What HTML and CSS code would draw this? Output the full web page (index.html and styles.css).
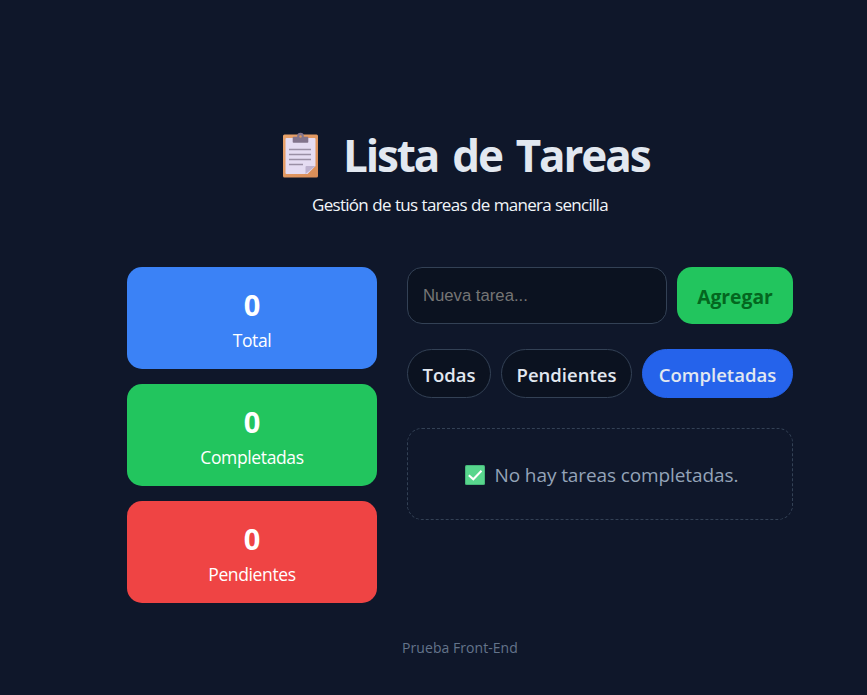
FILE: index.html
```html
<!DOCTYPE html>
<html lang="es">
<head>
<meta charset="utf-8">
<title>Lista de Tareas</title>
<link rel="stylesheet" href="styles.css">
</head>
<body>
<main class="app">
  <header class="header">
    <h1 class="title">
      <svg class="clipboard" viewBox="0 0 36 46" aria-hidden="true">
        <defs><linearGradient id="board" x2="1" y2="1"><stop stop-color="#e9a36b"/><stop offset="1" stop-color="#d98d58"/></linearGradient></defs>
        <rect x=".5" y="2.500" width="35" height="43" rx="1.500" fill="url(#board)"/>
        <path d="M4 6h28a1 1 0 0 1 1 1v27l-8 8H4a1 1 0 0 1-1-1V7a1 1 0 0 1 1-1z" fill="#e5dcf2"/>
        <path d="M23 42v-7a1 1 0 0 1 1-1h9z" fill="#bdb1ce"/>
        <path d="M11 5.500h4.500V4A2.500 2.500 0 0 1 20.500 4V5.500H25V10H11z" fill="#83748c" stroke="#83748c" stroke-width="1.600" stroke-linejoin="round"/>
        <circle cx="18" cy="4.500" r="1.200" fill="#d9965f"/>
        <path d="M6.500 17.500h22M6.500 22.500h22M6.500 27.500h22M6.500 32.500h14" stroke="#9a8fa5" stroke-width="1.600"/>
      </svg>
      <span class="title-text">Lista de Tareas</span>
    </h1>
    <p class="subtitle">Gestión de tus tareas de manera sencilla</p>
  </header>
  <div class="layout">
    <aside class="stats">
      <div class="stat total"><strong>0</strong><span>Total</span></div>
      <div class="stat done"><strong>0</strong><span>Completadas</span></div>
      <div class="stat pending"><strong>0</strong><span>Pendientes</span></div>
    </aside>
    <section class="tasks">
      <form class="form">
        <input class="input" type="text" placeholder="Nueva tarea...">
        <button class="add" type="button">Agregar</button>
      </form>
      <div class="filters">
        <button class="filter all" type="button">Todas</button>
        <button class="filter open" type="button">Pendientes</button>
        <button class="filter closed active" type="button">Completadas</button>
      </div>
      <div class="empty">
        <svg class="check" viewBox="0 0 20 20" aria-hidden="true">
          <rect width="20" height="20" rx="1.500" fill="#46b87a"/>
          <rect x="1" y="1" width="18" height="18" rx="1" fill="#58d68d"/>
          <path d="M3.800 10.200 8.300 14.300 16.500 5.800" fill="none" stroke="#fff" stroke-width="2"/>
        </svg>
        <span>No hay tareas completadas.</span>
      </div>
    </section>
  </div>
  <footer class="footer">Prueba Front-End</footer>
</main>
</body>
</html>
```
FILE: styles.css
```css
* { box-sizing: border-box; }
body {
  margin: 0;
  min-height: 695px;
  background: #0f172a;
  color: #e2e8f0;
  font-family: "Open Sans", "Noto Sans", sans-serif;
}
.app { width: 666px; margin-left: 127px; padding-top: 122px; }
.header { height: 145px; text-align: center; }
.title {
  display: flex;
  align-items: center;
  height: 66px;
  margin: 0;
  padding-left: 155px;
  font-size: 44px;
  font-weight: 800;
  line-height: 66px;
  white-space: nowrap;
}
.clipboard { width: 37px; height: 46px; margin-right: 24px; }
.title-text { font-weight: 700; letter-spacing: -2.100px; word-spacing: 4.500px; }
.subtitle { margin: 4px 0 0; font-size: 17px; line-height: 26px; letter-spacing: -0.720px; word-spacing: 0.500px; color: #f1f5f9; }
.layout { display: grid; grid-template-columns: 250px 386px; gap: 30px; }
.stats { display: flex; flex-direction: column; gap: 15px; }
.stat {
  display: flex;
  flex-direction: column;
  align-items: center;
  height: 102px;
  padding-top: 19px;
  border-radius: 15px;
  color: #fff;
}
.stat strong { font-size: 29px; line-height: 38px; }
.stat span { font-size: 17.500px; line-height: 32px; letter-spacing: -0.370px; }
.total { background: #3b82f6; }
.done { background: #22c55e; }
.pending { background: #ef4444; }
.form { display: flex; gap: 10px; }
.input {
  width: 260px;
  height: 57px;
  padding: 0 15px;
  border: 1px solid #334155;
  border-radius: 15px;
  background: #0b1220;
  color: #e2e8f0;
  font: 16.700px "Liberation Sans", sans-serif;
}
.input::placeholder { color: #757575; }
.add, .filter { padding: 2px 0 0; font: 700 18.500px "Open Sans", sans-serif; white-space: nowrap; }
.add { width: 116px; height: 57px; border: 0; border-radius: 15px; background: #22c55e; color: #04661f; font-size: 19.300px; }
.filters { display: flex; gap: 10px; margin-top: 25px; }
.filter {
  height: 49px;
  border: 1px solid #334155;
  border-radius: 25px;
  background: #0b1220;
  color: #e2e8f0;
  font-weight: 600;
}
.all { width: 84px; }
.open { width: 131px; }
.closed { width: 151px; }
.filter.active { border-color: #2563eb; background: #2563eb; }
.empty {
  display: flex;
  align-items: center;
  height: 92px;
  margin-top: 30px;
  padding: 2px 0 0 57px;
  border: 1px dashed #334155;
  border-radius: 15px;
  color: #94a3b8;
  font-size: 19px;
  letter-spacing: -0.100px;
  white-space: nowrap;
}
.check { width: 20px; height: 20px; margin-right: 9.500px; }
.footer { margin-top: 33px; text-align: center; font-size: 14px; line-height: 24px; letter-spacing: 0.050px; color: #64748b; }
```
